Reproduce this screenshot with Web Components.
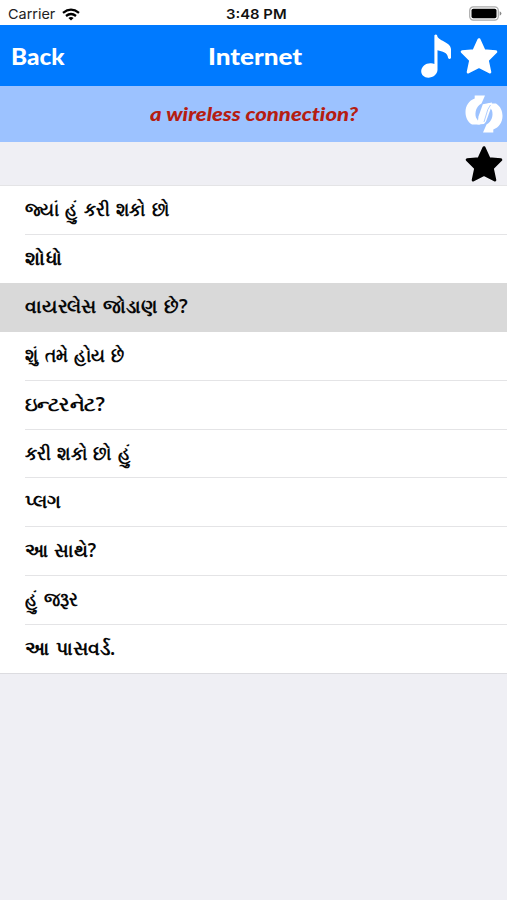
<!DOCTYPE html>
<html lang="gu">
<head>
<meta charset="utf-8">
<title>Internet</title>
<style>
html,body{margin:0;height:100%}
body{background:#efeff4;overflow:hidden}
</style>
</head>
<body>
<phrase-app></phrase-app>
<script>
// Text stretched horizontally to the width given by its attribute.
customElements.define('fit-text', class extends HTMLElement {
  connectedCallback() {
    this.attachShadow({mode:'open'}).innerHTML = `<style>
      :host{display:block;white-space:nowrap;width:${this.getAttribute('width')}px}
      span{display:inline-block;transform-origin:0 50%}
    </style><span><slot></slot></span>`;
    const s = this.shadowRoot.querySelector('span');
    s.style.transform = `scaleX(${this.getAttribute('width') / s.offsetWidth})`;
  }
});

customElements.define('status-bar', class extends HTMLElement {
  connectedCallback() {
    this.attachShadow({mode:'open'}).innerHTML = `<style>
      :host{display:grid;grid-template-columns:1fr auto 1fr;align-items:center;height:25.4px;background:#fff;
        font:13.5px/25px Inter,sans-serif;color:#222;padding:0 5px 0 8px;box-sizing:border-box}
      .l{display:flex;align-items:center;gap:7px;padding-top:2px}
      .t{font-weight:600;color:#111;padding:2px 0 0 2px}
      .b{justify-self:end}
      svg{display:block}
    </style>
    <div class="l"><fit-text width="47">Carrier</fit-text>
      <svg width="18" height="13" viewBox="0 0 18 13" fill="none" stroke="#000" stroke-width="2.3"><path d="M1 4.8Q9-1.6 17 4.8M4 8Q9 4.1 14 8"/><path d="M9 12.6L6.4 10Q9 7.9 11.6 10Z" fill="#000" stroke="none"/></svg></div>
    <div class="t"><fit-text width="60.5">3:48 PM</fit-text></div>
    <svg class="b" width="33" height="15" viewBox="0 0 33 15"><rect x=".7" y=".9" width="28.6" height="13.2" rx="3.6" fill="#fff" stroke="#aaa" stroke-width="1.2"/><rect x="2.5" y="2.7" width="25" height="9.6" rx="1.8"/><path d="M30.7 5.2Q32.4 6 32.4 7.5T30.7 9.8Z" fill="#888"/></svg>`;
  }
});

customElements.define('star-icon', class extends HTMLElement {
  connectedCallback() {
    this.attachShadow({mode:'open'}).innerHTML = `<style>:host{display:block;width:38px;height:38px}svg{display:block}</style>
    <svg width="38" height="38" viewBox="0 0 38 38" fill="currentColor" stroke="currentColor" stroke-width="3" stroke-linejoin="round"><path d="M19 2.7L24 13.7L35.8 14.8L27.3 23.3L29.8 35L19 29.3L8.2 35L10.7 23.3L2.2 14.8L14 13.7Z"/></svg>`;
  }
});

customElements.define('nav-bar', class extends HTMLElement {
  connectedCallback() {
    this.attachShadow({mode:'open'}).innerHTML = `<style>
      :host{display:grid;grid-template-columns:1fr auto 1fr;align-items:center;height:61px;background:#007aff;color:#fff;
        font:900 23px/60px Lato,sans-serif;padding:0 9px 0 11px;box-sizing:border-box}
      .i{justify-self:end;display:flex;align-items:center;gap:8px}
      svg{display:block}
    </style>
    <fit-text width="54">Back</fit-text><fit-text width="94">Internet</fit-text>
    <div class="i"><svg width="32" height="44" viewBox="0 0 32 44" fill="#fff"><path d="M14.4 1.2Q16-.1 17.1 1.2C17.5 7 30.5 7.5 31 15V24Q29.5 26 28.1 24C27.6 18.3 22.4 17.5 17.5 16.3V36C17.3 40.4 13 43.7 8.3 43.7C4.2 43.7 1.2 41 1.2 37.3C1.2 32.4 6.2 28.8 11 29.2Q13 29.3 14.4 30Z"/></svg>
    <star-icon></star-icon></div>`;
  }
});

customElements.define('prompt-bar', class extends HTMLElement {
  connectedCallback() {
    this.attachShadow({mode:'open'}).innerHTML = `<style>
      :host{display:grid;grid-template-columns:1fr auto 1fr;align-items:center;height:56px;background:#9cc2ff;color:#b51d12;
        font:italic 900 19.5px/54px Lato,sans-serif;font-variant-ligatures:none;padding:0 4px;box-sizing:border-box}
      fit-text{grid-column:2;margin-top:-1px}
      svg{display:block;justify-self:end}
    </style>
    <fit-text width="208">a wireless connection?</fit-text>
    <svg width="38" height="38" viewBox="0 0 38 38" fill="#fff"><path d="M9.7.6H20L16.5 8.4C11 11.5 9.6 17.5 11 22.5L15.4 29.6H7C2.5 26.7.5 22.3.5 17C.5 10.8 4 5.5 9.7 3.5Z"/><path d="M28.3 37.4H18L21.5 29.6C27 26.5 28.4 20.5 27 15.5L22.6 8.4H31C35.5 11.3 37.5 15.7 37.5 21C37.5 27.2 34 32.5 28.3 34.5Z"/><path d="M17.8 9.2L27 7.6L26 13L21 26.5L19 29L12.5 29.5L13.5 21.5Z"/><path d="M25.5 10L22.8 14.5L19 27" fill="none" stroke="#9cc2ff" stroke-width=".8"/></svg>`;
  }
});

customElements.define('phrase-row', class extends HTMLElement {
  connectedCallback() {
    this.attachShadow({mode:'open'}).innerHTML = `<style>
      :host{display:block;height:48.75px;box-sizing:border-box;padding-left:25px;background:#fff;color:#080808;
        font:600 19px/46px "Noto Sans",sans-serif;word-spacing:2px}
      :host([selected]){background:#d9d9d9}
      div{height:100%;box-sizing:border-box;border-bottom:1px solid #e4e4e6}
      :host([selected]) div,:host([plain]) div{border-color:transparent}
    </style><div><fit-text width="${this.getAttribute('width')}"><slot></slot></fit-text></div>`;
  }
});

customElements.define('phrase-app', class extends HTMLElement {
  connectedCallback() {
    const rows = [['જ્યાં હું કરી શકો છો',145],['શોધો',37],['વાયરલેસ જોડાણ છે?',163],['શું તમે હોય છે',100],['ઇન્ટરનેટ?',80],['કરી શકો છો હું',106],['પ્લગ',36],['આ સાથે?',71.5],['હું જરૂર',53],['આ પાસવર્ડ.',90]];
    this.attachShadow({mode:'open'}).innerHTML = `<style>
      :host{display:flex;flex-direction:column;height:900px}
      .f{height:43.5px;box-sizing:border-box;display:flex;justify-content:flex-end;align-items:center;padding:1px 4px 0 0;color:#000;border-bottom:1px solid #e4e4e6}
      .list{border-bottom:1px solid #dcdce0}
    </style>
    <status-bar></status-bar><nav-bar></nav-bar><prompt-bar></prompt-bar>
    <div class="f"><star-icon></star-icon></div>
    <div class="list">${rows.map((r,i)=>`<phrase-row width="${r[1]}"${i==2?' selected':''}${i==1||i==9?' plain':''}>${r[0]}</phrase-row>`).join('')}</div>`;
  }
});
</script>
</body>
</html>
